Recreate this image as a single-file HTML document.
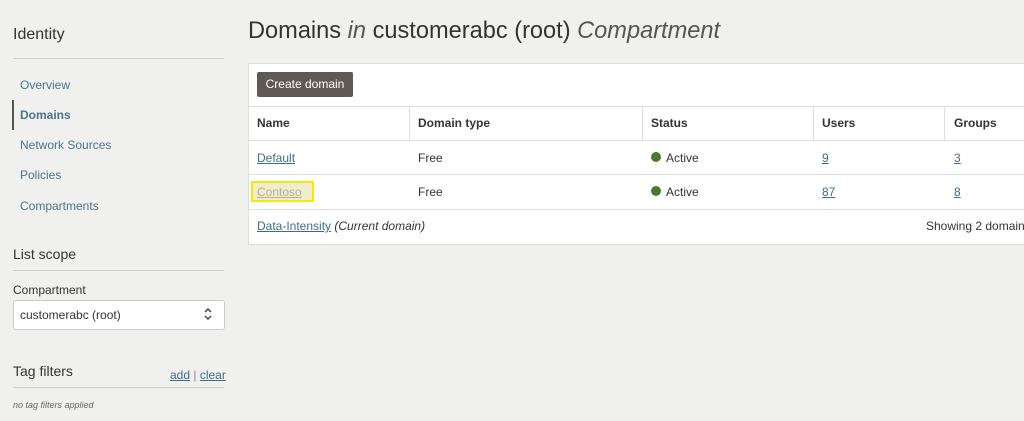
<!DOCTYPE html>
<html><head><style>
body{margin:0;width:1024px;height:421px;overflow:hidden;background:#f0f0ef;font-family:"Liberation Sans",sans-serif;color:#333;position:relative}
.a{position:absolute;white-space:nowrap}
.lnk{color:#3d6d86;text-decoration:underline}
.nav{font-size:12px;color:#4c7489}
.hr{position:absolute;height:1px;background:#cfcfcf}
</style></head><body>
<div class="a" style="left:13px;top:26px;font-size:16px;color:#333">Identity</div>
<div class="hr" style="left:13px;top:58px;width:211px"></div>
<div class="a nav" style="left:20px;top:78px">Overview</div>
<div class="a" style="left:12px;top:100px;width:2px;height:30px;background:#555"></div>
<div class="a nav" style="left:20px;top:108px;font-weight:bold">Domains</div>
<div class="a nav" style="left:20px;top:138px">Network Sources</div>
<div class="a nav" style="left:20px;top:168px">Policies</div>
<div class="a nav" style="left:20px;top:199px">Compartments</div>
<div class="a" style="left:13px;top:246px;font-size:14px">List scope</div>
<div class="hr" style="left:13px;top:270px;width:211px"></div>
<div class="a" style="left:13px;top:283px;font-size:12px">Compartment</div>
<div class="a" style="left:13px;top:300px;width:210px;height:28px;background:#fff;border:1px solid #ccc;border-radius:3px"></div>
<div class="a" style="left:20px;top:308px;font-size:12px">customerabc (root)</div>
<svg class="a" style="left:202px;top:307px" width="12" height="14"><path d="M3 5l3-3 3 3M3 9l3 3 3-3" stroke="#444" stroke-width="1.5" fill="none"/></svg>
<div class="a" style="left:13px;top:363px;font-size:14px">Tag filters</div>
<div class="a" style="left:170px;top:368px;font-size:12px"><span class="lnk">add</span> <span style="color:#888">|</span> <span class="lnk">clear</span></div>
<div class="hr" style="left:13px;top:387px;width:211px"></div>
<div class="a" style="left:13px;top:400px;font-size:9px;font-style:italic;color:#666">no tag filters applied</div>

<div class="a" style="left:248px;top:18px;font-size:23.6px;color:#333">Domains <i style="color:#555">in</i> customerabc (root) <i style="color:#555">Compartment</i></div>
<div class="a" style="left:248px;top:63px;width:790px;height:180px;background:#fff;border:1px solid #ddd"></div>
<div class="a" style="left:257px;top:72px;width:96px;height:25px;background:#5f5a55;border-radius:2px;color:#fff;font-size:12px;line-height:25px;text-align:center">Create domain</div>
<div class="hr" style="left:249px;top:106px;width:775px;background:#ddd"></div>
<div class="hr" style="left:249px;top:140px;width:775px;background:#ddd"></div>
<div class="hr" style="left:249px;top:174px;width:775px;background:#ddd"></div>
<div class="hr" style="left:249px;top:209px;width:775px;background:#ddd"></div>
<div class="a" style="left:409px;top:106px;width:1px;height:34px;background:#ddd"></div>
<div class="a" style="left:642px;top:106px;width:1px;height:34px;background:#ddd"></div>
<div class="a" style="left:813px;top:106px;width:1px;height:34px;background:#ddd"></div>
<div class="a" style="left:944px;top:106px;width:1px;height:34px;background:#ddd"></div>
<div class="a" style="left:257px;top:116px;font-size:12px;font-weight:bold">Name</div>
<div class="a" style="left:418px;top:116px;font-size:12px;font-weight:bold">Domain type</div>
<div class="a" style="left:651px;top:116px;font-size:12px;font-weight:bold">Status</div>
<div class="a" style="left:822px;top:116px;font-size:12px;font-weight:bold">Users</div>
<div class="a" style="left:954px;top:116px;font-size:12px;font-weight:bold">Groups</div>
<div class="a lnk" style="left:257px;top:151px;font-size:12px">Default</div>
<div class="a" style="left:418px;top:151px;font-size:12px">Free</div>
<div class="a" style="left:651px;top:152px;width:10px;height:10px;border-radius:50%;background:#4a7a2c"></div>
<div class="a" style="left:666px;top:151px;font-size:12px">Active</div>
<div class="a lnk" style="left:822px;top:151px;font-size:12px">9</div>
<div class="a lnk" style="left:954px;top:151px;font-size:12px">3</div>
<div class="a" style="left:251px;top:181px;width:63px;height:21px;border:2px solid #f2ea00;background:#f0ecd0;box-sizing:border-box"></div>
<div class="a" style="left:257px;top:185px;font-size:12px;color:#b5b29a;text-decoration:underline">Contoso</div>
<div class="a" style="left:418px;top:185px;font-size:12px">Free</div>
<div class="a" style="left:651px;top:186px;width:10px;height:10px;border-radius:50%;background:#4a7a2c"></div>
<div class="a" style="left:666px;top:185px;font-size:12px">Active</div>
<div class="a lnk" style="left:822px;top:185px;font-size:12px">87</div>
<div class="a lnk" style="left:954px;top:185px;font-size:12px">8</div>
<div class="a" style="left:257px;top:219px;font-size:12px"><span class="lnk">Data-Intensity</span> <i>(Current domain)</i></div>
<div class="a" style="left:926px;top:219px;font-size:12px">Showing 2 domains</div>
</body></html>
